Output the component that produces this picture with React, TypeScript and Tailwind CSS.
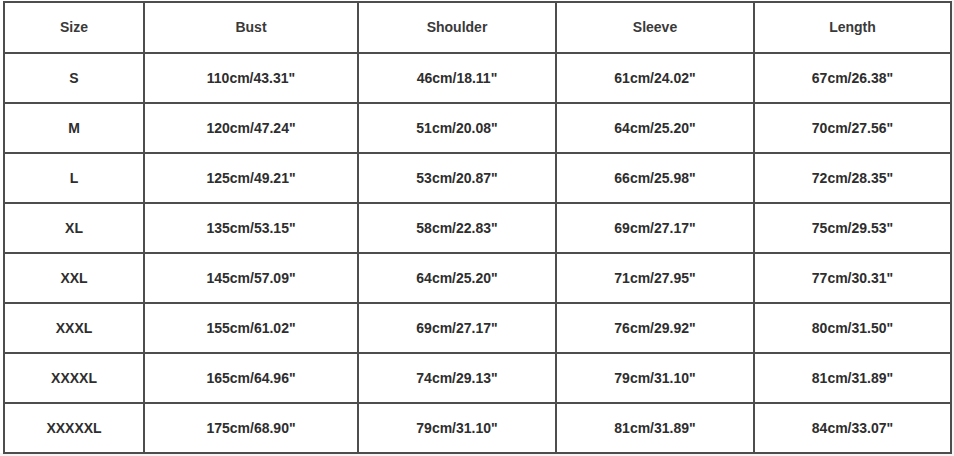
const headers = ['Size', 'Bust', 'Shoulder', 'Sleeve', 'Length'];

const rows = [
  ['S', '110cm/43.31"', '46cm/18.11"', '61cm/24.02"', '67cm/26.38"'],
  ['M', '120cm/47.24"', '51cm/20.08"', '64cm/25.20"', '70cm/27.56"'],
  ['L', '125cm/49.21"', '53cm/20.87"', '66cm/25.98"', '72cm/28.35"'],
  ['XL', '135cm/53.15"', '58cm/22.83"', '69cm/27.17"', '75cm/29.53"'],
  ['XXL', '145cm/57.09"', '64cm/25.20"', '71cm/27.95"', '77cm/30.31"'],
  ['XXXL', '155cm/61.02"', '69cm/27.17"', '76cm/29.92"', '80cm/31.50"'],
  ['XXXXL', '165cm/64.96"', '74cm/29.13"', '79cm/31.10"', '81cm/31.89"'],
  ['XXXXXL', '175cm/68.90"', '79cm/31.10"', '81cm/31.89"', '84cm/33.07"'],
];

export default function App() {
  return (
    <div className="w-[954px] h-[456px] bg-[#f4f4f4] overflow-hidden font-['Liberation_Sans',Arial,sans-serif]">
      <div className="w-[951px] h-[453px] bg-white pl-[3px] pt-[1px]">
        {/* Size chart */}
        <div className="grid grid-cols-[138px_212px_196px_196px_195px] grid-rows-[49px_repeat(8,48px)] gap-[2px] p-[2px] bg-[#4d4d4d] w-fit">
          {headers.map((h) => (
            <div key={h} className="bg-white flex items-center justify-center text-[14px] font-bold text-[#3a3a3a]">
              {h}
            </div>
          ))}
          {rows.map((row) =>
            row.map((cell, i) => (
              <div
                key={row[0] + i}
                className="bg-white flex items-center justify-center text-[14px] font-bold text-[#2e2e2e]"
              >
                {cell}
              </div>
            ))
          )}
        </div>
      </div>
    </div>
  );
}
